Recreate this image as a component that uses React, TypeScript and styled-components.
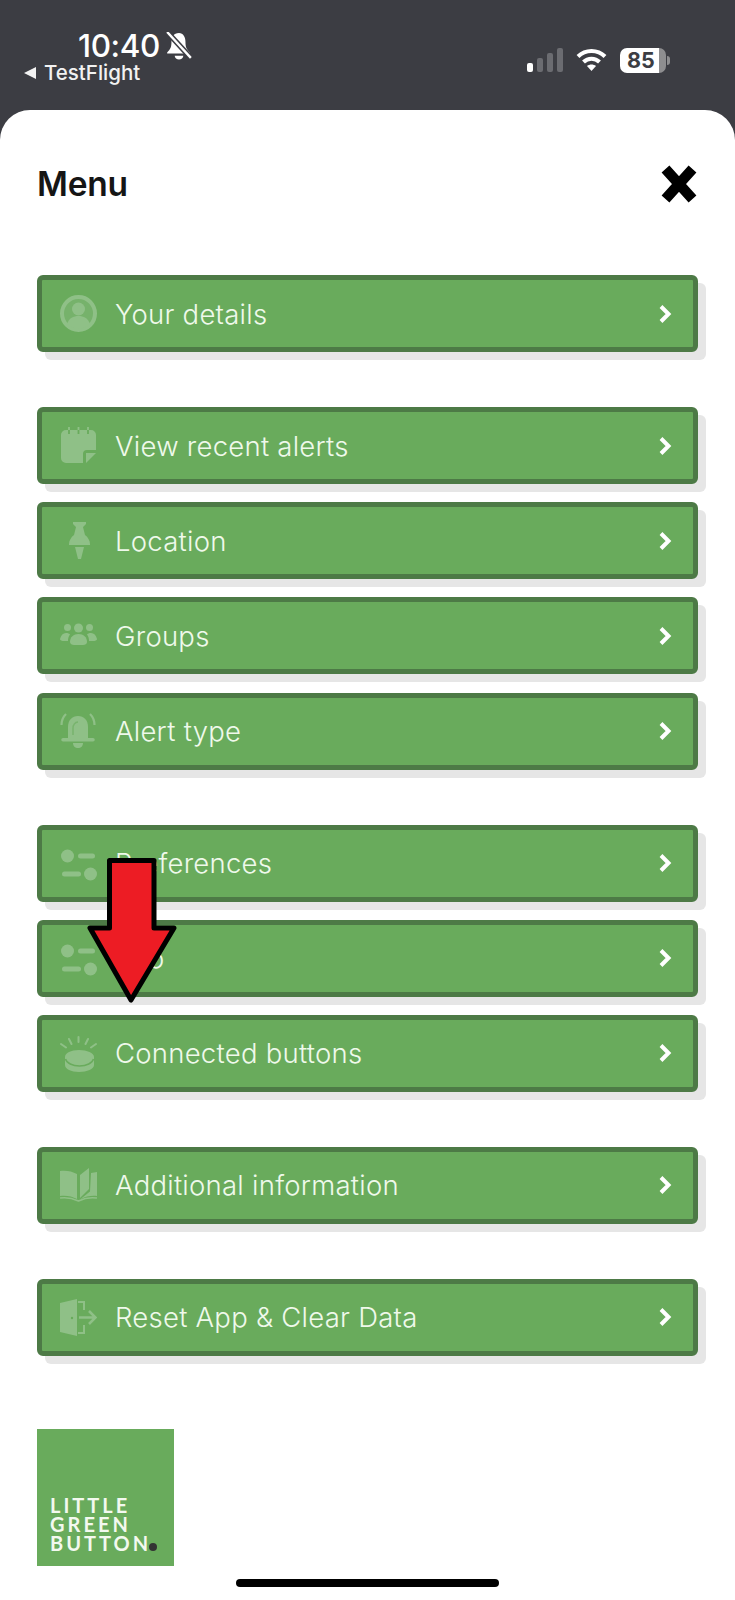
import React from "react";
import styled, { createGlobalStyle } from "styled-components";

const GlobalStyle = createGlobalStyle`
  html, body {
    margin: 0;
    padding: 0;
    background: #3c3d43;
  }
  * { box-sizing: border-box; }
`;

const Page = styled.div`
  position: relative;
  width: 735px;
  height: 1600px;
  overflow: hidden;
  background: #3c3d43;
  font-family: "Inter", "Liberation Sans", sans-serif;
`;

const StatusBar = styled.div`
  height: 110px;
  display: flex;
  justify-content: space-between;
  padding: 31px 69px 0 23px;
  color: #fff;
`;

const StatusLeft = styled.div`
  display: flex;
  flex-direction: column;
`;

const TimeRow = styled.div`
  display: flex;
  align-items: center;
  gap: 6px;
  padding-left: 55px;
  height: 30px;
`;

const Time = styled.span`
  font-size: 31.5px;
  font-weight: 500;
  letter-spacing: -0.4px;
  line-height: 30px;
`;

const BackRow = styled.div`
  display: flex;
  align-items: center;
  gap: 8px;
  height: 20px;
  margin-top: 2px;
`;

const BackLabel = styled.span`
  font-size: 20.5px;
  font-weight: 500;
  color: #f2f2f2;
  line-height: 20px;
`;

const StatusRight = styled.div`
  display: flex;
  align-items: center;
  gap: 13px;
  height: 26px;
  margin-top: 16px;
`;

const Battery = styled.div`
  position: relative;
  width: 46px;
  height: 25px;
  border-radius: 7px;
  background: linear-gradient(to right, #fff 85%, #8e8e90 85%);
  display: flex;
  align-items: center;
  padding-left: 7px;
  font-size: 21.5px;
  font-weight: 700;
  color: #3c3d43;

  &::after {
    content: "";
    position: absolute;
    right: -4px;
    top: 8px;
    width: 3px;
    height: 9px;
    border-radius: 0 3px 3px 0;
    background: #8e8e90;
  }
`;

const Sheet = styled.div`
  height: 1490px;
  background: #fff;
  border-radius: 30px 30px 0 0;
  padding: 0 37px;
  display: flex;
  flex-direction: column;
`;

const Header = styled.div`
  height: 165px;
  padding: 55px 0 0;
  display: flex;
  justify-content: space-between;
  align-items: flex-start;
`;

const Title = styled.h1`
  margin: 0;
  font-size: 33.5px;
  font-weight: 600;
  letter-spacing: -0.2px;
  line-height: 38px;
  color: #151515;
`;

const CloseButton = styled.div`
  color: #000;
  height: 38px;
`;

const Groups = styled.div`
  display: flex;
  flex-direction: column;
  gap: 55px;
`;

const Group = styled.div`
  display: flex;
  flex-direction: column;
  gap: 18.2px;
`;

const Row = styled.div`
  width: 661px;
  height: 77px;
  display: flex;
  align-items: center;
  gap: 18px;
  padding: 0 21px 0 18px;
  background: #69ab5c;
  border: 5px solid #4d7a46;
  border-radius: 6px;
  box-shadow: 8px 8px 0 #e6e6e6;
`;

const RowIcon = styled.div`
  width: 37px;
  height: 37px;
  color: #8fc087;
  flex: none;
`;

const RowLabel = styled.span`
  flex: 1;
  font-size: 27.5px;
  font-weight: 300;
  letter-spacing: 0.25px;
  color: #eff9eb;
`;

const Chevron = styled.div`
  width: 14px;
  height: 20px;
  color: #fff;
  flex: none;
`;

const Logo = styled.div`
  width: 137px;
  height: 137px;
  margin-top: 73px;
  padding: 0 0 13px 13px;
  background: #69ab5c;
  display: flex;
  flex-direction: column;
  justify-content: flex-end;
  font-family: "Lato", sans-serif;
  font-size: 20px;
  font-weight: 700;
  line-height: 19px;
  letter-spacing: 3px;
  color: #f3f9ef;
`;

const LogoLine = styled.div`
  height: 19px;
  white-space: nowrap;
`;

const LogoDot = styled.span`
  display: inline-block;
  width: 8px;
  height: 8px;
  margin-left: -2px;
  border-radius: 50%;
  background: #333;
`;

const HomeIndicator = styled.div`
  width: 263px;
  height: 8px;
  margin: 13px auto 0;
  border-radius: 4px;
  background: #000;
`;

const ArrowOverlay = styled.svg`
  position: absolute;
  left: 84px;
  top: 855px;
`;

const Icon = ({ children }: { children: React.ReactNode }) => (
  <svg width="37" height="37" viewBox="0 0 37 37" fill="currentColor">
    {children}
  </svg>
);

const UserIcon = () => (
  <Icon>
    <circle cx="18.5" cy="18.5" r="16.5" fill="currentColor" fillOpacity="0.35" stroke="currentColor" strokeWidth="4" />
    <circle cx="18.5" cy="14" r="6.5" />
    <path d="M7 29c2-6 6.500-8 11.500-8s9.500 2 11.500 8c-3 3-7 4.500-11.500 4.500S10 32 7 29z" />
  </Icon>
);

const NotesIcon = () => (
  <Icon>
    <path d="M6 3h25a5 5 0 0 1 5 5v15H27a4 4 0 0 0-4 4v9H6a5 5 0 0 1-5-5V8a5 5 0 0 1 5-5z" />
    <path d="M26 26h10L26 36z" />
    <path d="M9 0v3M18.500 0v3M28 0v3" stroke="currentColor" strokeWidth="1.800" />
    <path d="M9 3v4M18.500 3v4M28 3v4" stroke="#69ab5c" strokeWidth="1.800" />
  </Icon>
);

const PinIcon = () => (
  <Icon>
    <g transform="translate(1 0)">
      <path d="M12 0h13v2l-3 3 2 8c3 2 5 6 5 9v1H8v-1c0-3 2-7 5-9l2-8-3-3z" />
      <path d="M14 25h9l-3 12h-3z" />
    </g>
  </Icon>
);

const GroupsIcon = () => (
  <Icon>
    <circle cx="7.500" cy="10.500" r="3.500" />
    <circle cx="29.500" cy="10.500" r="3.500" />
    <circle cx="18.500" cy="11" r="4.500" />
    <path d="M0 22c1-4 3-6 6-6 2 0 3 .5 4 1.500-1.500 2-2 4-2 6.500H4c-2 0-4-.5-4-2z" />
    <path d="M37 22c-1-4-3-6-6-6-2 0-3 .5-4 1.500 1.500 2 2 4 2 6.500h4c2 0 4-.5 4-2z" />
    <path d="M10 25c0-5 3.500-8 8.500-8s8.500 3 8.500 8c0 2-2 3-4 3h-9c-2 0-4-1-4-3z" />
  </Icon>
);

const BellIcon = () => (
  <Icon>
    <path d="M18 3c-6 0-10 4-10 11v12h20V14c0-7-4-11-10-11z" />
    <path d="M3 25h30a1.500 1.500 0 0 1 0 3.500H3A1.500 1.500 0 0 1 3 25z" />
    <path d="M13 30h10c0 3-2 5-5 5s-5-2-5-5z" />
    <path d="M6 1C3 4 1.500 8 1.500 12M30 1c3 3 4.500 7 4.500 11" fill="none" stroke="currentColor" strokeWidth="2.200" />
    <path d="M13 22v-7c0-3 2-6 5-6" fill="none" stroke="#69ab5c" strokeOpacity="0.6" strokeWidth="1.500" />
  </Icon>
);

const SlidersIcon = () => (
  <Icon>
    <circle cx="7.500" cy="11" r="6.500" />
    <rect x="18" y="8.500" width="17" height="5" rx="2.500" />
    <rect x="2" y="26.500" width="19" height="5" rx="2.500" />
    <circle cx="30.500" cy="29" r="6.500" />
  </Icon>
);

const DiscIcon = () => (
  <Icon>
    <path d="M5 22c0-4 6-7 14-7s15 3 15 7v8c0 4-7 7-15 7S5 34 5 30z" />
    <path d="M5.500 24c1 4 7 7 14 7s13-3 14-7" fill="none" stroke="#69ab5c" strokeWidth="1.500" />
    <path d="M18.500 2v5M9 4l2.500 5M28 4l-2.500 5M1 9l5 3.500M36 9l-5 3.500" stroke="currentColor" strokeWidth="2" strokeLinecap="round" />
  </Icon>
);

const BookIcon = () => (
  <Icon>
    <path d="M0 4c5-1 12 0 17 3v25c-5-3-12-4-17-3z" />
    <path d="M20 8l9-7v21l-9 9z" />
    <path d="M31 6l6-1v24c-5-.5-11 0-17 3.500l10-8z" />
    <path d="M0 31c6-1 12 0 18.500 3 6-3 12-4 18.500-3" fill="none" stroke="currentColor" strokeWidth="1.500" />
  </Icon>
);

const DoorIcon = () => (
  <Icon>
    <path d="M0 4l17-4v37L0 33z" />
    <circle cx="12" cy="19" r="1.200" fill="#69ab5c" />
    <path d="M18 3h6v8M18 34h6v-8" fill="none" stroke="currentColor" strokeWidth="2" />
    <path d="M19 18.500h16M29 12l6.500 6.500L29 25" fill="none" stroke="currentColor" strokeWidth="2.500" />
  </Icon>
);

const CloseIcon = () => (
  <svg width="38" height="38" viewBox="0 0 38 38" fill="none">
    <path d="M5.500 4l27 30M32.500 4L5.500 34" stroke="currentColor" strokeWidth="10.500" />
  </svg>
);

const ChevronIcon = () => (
  <svg width="14" height="20" viewBox="0 0 14 20" fill="none">
    <path d="M3 2.500L10.500 10 3 17.500" stroke="currentColor" strokeWidth="4" />
  </svg>
);

const groups = [
  [{ label: "Your details", icon: <UserIcon /> }],
  [
    { label: "View recent alerts", icon: <NotesIcon /> },
    { label: "Location", icon: <PinIcon /> },
    { label: "Groups", icon: <GroupsIcon /> },
    { label: "Alert type", icon: <BellIcon /> },
  ],
  [
    { label: "Preferences", icon: <SlidersIcon /> },
    { label: "Info", icon: <SlidersIcon /> },
    { label: "Connected buttons", icon: <DiscIcon /> },
  ],
  [{ label: "Additional information", icon: <BookIcon /> }],
  [{ label: "Reset App & Clear Data", icon: <DoorIcon /> }],
];

export default function App() {
  return (
    <Page>
      <GlobalStyle />
      <StatusBar>
        <StatusLeft>
          <TimeRow>
            <Time>10:40</Time>
            <svg width="26" height="28" viewBox="0 0 24 26" fill="#fff">
              <path d="M12 1c-5 0-7 4-7 8 0 5-1 7-4 10v1h21v-1c-3-3-4-5-4-10 0-4-2-8-6-8z" />
              <path d="M8 22h8c0 2-2 3.500-4 3.500S8 24 8 22z" />
              <path d="M1 0l22 24" stroke="#3c3d43" strokeWidth="5" />
              <path d="M1 0l22 24" stroke="#fff" strokeWidth="2.200" />
            </svg>
          </TimeRow>
          <BackRow>
            <svg width="13" height="14" viewBox="0 0 13 14" fill="#f2f2f2">
              <path d="M13 1v12L1 7z" />
            </svg>
            <BackLabel>TestFlight</BackLabel>
          </BackRow>
        </StatusLeft>
        <StatusRight>
          <svg width="36" height="24" viewBox="0 0 36 24">
            <rect x="0" y="15" width="6" height="9" rx="2" fill="#fff" />
            <rect x="10" y="10" width="6" height="14" rx="2" fill="#6b6c71" />
            <rect x="20" y="5" width="6" height="19" rx="2" fill="#6b6c71" />
            <rect x="30" y="0" width="6" height="24" rx="2" fill="#6b6c71" />
          </svg>
          <svg width="31" height="24" viewBox="0 0 31 24" fill="none" stroke="#fff" strokeWidth="4">
            <path d="M2 8.500C9.500 1 21.500 1 29 8.500" />
            <path d="M7.500 14c4.500-4.500 11.500-4.500 16 0" />
            <path d="M15.500 23l-4.500-5c2.500-2 6.500-2 9 0z" fill="#fff" stroke="none" />
          </svg>
          <Battery>85</Battery>
        </StatusRight>
      </StatusBar>

      <Sheet>
        <Header>
          <Title>Menu</Title>
          <CloseButton>
            <CloseIcon />
          </CloseButton>
        </Header>
        <Groups>
          {groups.map((items, i) => (
            <Group key={i}>
              {items.map((item) => (
                <Row key={item.label}>
                  <RowIcon>{item.icon}</RowIcon>
                  <RowLabel>{item.label}</RowLabel>
                  <Chevron>
                    <ChevronIcon />
                  </Chevron>
                </Row>
              ))}
            </Group>
          ))}
        </Groups>
        <Logo>
          <LogoLine>LITTLE</LogoLine>
          <LogoLine>GREEN</LogoLine>
          <LogoLine>
            BUTTON
            <LogoDot />
          </LogoLine>
        </Logo>
        <HomeIndicator />
      </Sheet>

      <ArrowOverlay width="96" height="152" viewBox="0 0 96 152">
        <path
          d="M25.500 5.500H70V73H90L47 145 6 73H25.500z"
          fill="#ed1c24"
          stroke="#000"
          strokeWidth="5"
          strokeLinejoin="round"
        />
      </ArrowOverlay>
    </Page>
  );
}
